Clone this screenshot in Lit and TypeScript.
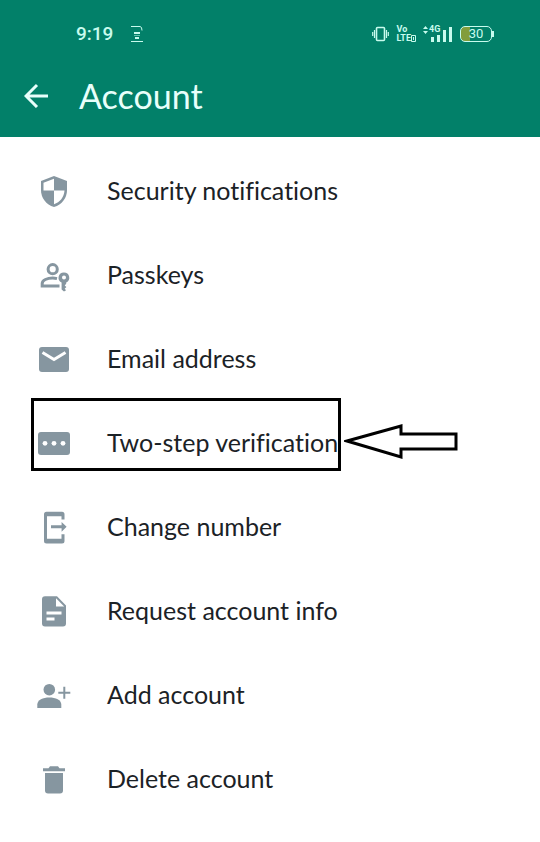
import { LitElement, html, css, svg } from "lit";
import { customElement } from "lit/decorators.js";

const icons = {
  shield: svg`
    <path d="M18 3 31 8v9c0 8-5 14.500-13 17C10 31.500 5 25 5 17V8z" />
    <path class="paper" d="M7.500 9.800 18 5.800V17.500H7.500zM18 17.500h10.500C28 24.500 24 29 18 31.300z" />`,
  passkey: svg`
    <circle class="line" cx="16.700" cy="12.200" r="4.600" />
    <path class="line" d="M23.500 29H6.200v-2.500c0-3.500 5-5.400 10.500-5.400 1.500 0 3 .2 4.300.5" />
    <path fill-rule="evenodd" d="M28 15.400a5.300 5.300 0 0 1 2.200 10.100v1.300l-1.500 1.600 1.700 1.700-1.700 1.700 1.400 1.400L28 34.500l-2.400-2V25.500A5.300 5.300 0 0 1 28 15.400zm0 3.200a2 2 0 1 0 0 4 2 2 0 0 0 0-4z" />`,
  mail: svg`
    <rect x="3" y="6" width="30" height="25" rx="3" />
    <path class="mark" d="m6.500 11.500 11.500 7 11.500-7" />`,
  pin: svg`
    <rect x="2" y="7" width="32" height="23" rx="3" />
    <g class="paper"><circle cx="9" cy="18.300" r="2.400" /><circle cx="18" cy="18.300" r="2.400" /><circle cx="27" cy="18.300" r="2.400" /></g>`,
  change: svg`
    <path fill-rule="evenodd" d="M10.500 2.700H26a2.500 2.500 0 0 1 2.500 2.500v5.300h-3V7.200H11v22.600h14.500v-4.500h3V32a2.500 2.500 0 0 1-2.500 2.500H10.500A2.500 2.500 0 0 1 8 32V5.200a2.500 2.500 0 0 1 2.500-2.500z" />
    <path d="M15 16.300h10.600v-3.400l5 4.900-5 4.900v-3.400H15z" />`,
  document: svg`
    <path d="M9 3.300h12L30 12.500V30.500a3 3 0 0 1-3 3H9a3 3 0 0 1-3-3V6.300a3 3 0 0 1 3-3z" />
    <path class="paper" d="M20 5.300v8.200h8.200z" />
    <path class="mark" d="M10.500 20h15M10.500 26h8" />`,
  add: svg`
    <circle cx="13.300" cy="12.700" r="5.800" />
    <path d="M1.300 31v-3.500c0-4.500 5.700-7 12-7s12 2.500 12 7V31z" />
    <path class="line plus" d="M28.300 9.700v12M22.300 15.700h12" />`,
  trash: svg`
    <path d="M14 5.300h8l1.500 2H29v3H7v-3h5.500z" />
    <path d="M9 12h18v17.500a3 3 0 0 1-3 3H12a3 3 0 0 1-3-3z" />`,
};

const items: { label: string; icon: keyof typeof icons; marked?: boolean }[] = [
  { label: "Security notifications", icon: "shield" },
  { label: "Passkeys", icon: "passkey" },
  { label: "Email address", icon: "mail" },
  { label: "Two-step verification", icon: "pin", marked: true },
  { label: "Change number", icon: "change" },
  { label: "Request account info", icon: "document" },
  { label: "Add account", icon: "add" },
  { label: "Delete account", icon: "trash" },
];

@customElement("app-root")
export class AppRoot extends LitElement {
  static styles = css`
    :host {
      display: block;
      min-height: 100vh;
      background: #fff;
      color: #1b2226;
      font-family: Lato, "Open Sans", sans-serif;
      font-variant-ligatures: none;
    }
    button {
      border: 0;
      padding: 0;
      margin: 0;
      background: none;
      color: inherit;
      font: inherit;
      text-align: left;
    }
    svg {
      display: block;
      flex: none;
    }
    header {
      background: #028069;
      color: #e8fffb;
      padding: 16px 24px 0;
    }
    .status {
      display: flex;
      align-items: center;
      height: 36px;
      padding: 0 22px 0 52px;
      color: #c8fbee;
    }
    .time {
      font: 500 19px/24px Roboto, sans-serif;
      margin-right: 16px;
    }
    .tray {
      display: flex;
      align-items: center;
      gap: 7px;
      margin-left: auto;
    }
    .volte {
      display: grid;
      font: 700 9px/9px Roboto, sans-serif;
    }
    .lte {
      display: flex;
      align-items: center;
    }
    .signal {
      display: grid;
      grid-template-columns: 6px auto;
    }
    .signal svg,
    .signal span {
      grid-row: 1;
    }
    .signal svg {
      grid-column: 1 / 3;
    }
    .signal span {
      grid-column: 2;
      font: 700 9px/9px Roboto, sans-serif;
    }
    .battery {
      display: flex;
      align-items: center;
    }
    .cell {
      box-sizing: border-box;
      width: 32px;
      height: 16px;
      border: 1px solid currentColor;
      border-radius: 5px;
      background: linear-gradient(90deg, #829d3b 9px, transparent 9px);
      font: 13px/14px Roboto, sans-serif;
      text-align: center;
    }
    .nub {
      width: 2px;
      height: 6px;
      background: currentColor;
    }
    .bar {
      display: flex;
      align-items: center;
      gap: 30px;
      height: 85px;
    }
    h1 {
      margin: 0;
      padding-top: 2px;
      font-size: 34px;
      line-height: 48px;
      font-weight: 400;
    }
    ul {
      list-style: none;
      margin: 0;
      padding: 12px 0;
    }
    li {
      position: relative;
    }
    .item {
      display: flex;
      align-items: center;
      gap: 35px;
      width: 100%;
      height: 84px;
      padding: 0 36px;
      font-size: 25px;
      line-height: 32px;
    }
    .label {
      padding-bottom: 2px;
    }
    .icon {
      fill: #8696a0;
    }
    .paper {
      fill: #fff;
    }
    .line {
      fill: none;
      stroke: #8696a0;
      stroke-width: 3;
    }
    .plus {
      stroke-width: 2;
    }
    .mark {
      fill: none;
      stroke: #fff;
      stroke-width: 3;
    }
    .frame {
      position: absolute;
      box-sizing: border-box;
      left: 31px;
      top: -3px;
      width: 310px;
      height: 73px;
      border: 3px solid #000;
      pointer-events: none;
    }
    .arrow {
      position: absolute;
      left: 344px;
      top: 20px;
      fill: #fff;
      stroke: #000;
      stroke-width: 3;
      pointer-events: none;
    }
  `;

  render() {
    return html`
      <header>
        <div class="status">
          <span class="time">9:19</span>
          <svg width="16" height="20" viewBox="0 0 16 20" fill="none" stroke="currentColor">
            <path d="M2 2.500h9q2 0 2 4M2 17.500h12" />
            <path d="M5 9h6M6 14h4" stroke-width="2" />
            <path d="M5 11.500h6" opacity=".5" />
          </svg>
          <div class="tray">
            <svg width="17" height="16" viewBox="0 0 17 16" fill="none" stroke="currentColor">
              <rect x="4.500" y="1.500" width="8" height="13" rx="1" stroke-width="1.600" />
              <path d="M2.500 4v8M14.500 4v8M.7 6v4M16.300 6v4" stroke-width="1.200" />
            </svg>
            <div class="volte">
              <span>Vo</span>
              <span class="lte">LTE
                <svg width="5" height="7" viewBox="0 0 5 7" fill="none" stroke="currentColor">
                  <path d="M.5.5h4v6h-4zM2.500 2v3" />
                </svg>
              </span>
            </div>
            <div class="signal">
              <svg width="30" height="18" viewBox="0 0 30 18" fill="currentColor">
                <path d="m0 4 2.500-3L5 4zM0 6h5L2.500 9zM8 12h3v5H8zM14 10h3v7h-3zM20 5h3v12h-3zM26 2h3v15h-3z" />
              </svg>
              <span>4G</span>
            </div>
            <div class="battery"><span class="cell">30</span><span class="nub"></span></div>
          </div>
        </div>
        <div class="bar">
          <button class="back" aria-label="Back">
            <svg width="25" height="26" viewBox="0 0 25 26" fill="none" stroke="currentColor" stroke-width="3">
              <path d="M24 14H2M13 3 2 14l11 11" />
            </svg>
          </button>
          <h1>Account</h1>
        </div>
      </header>
      <ul>
        ${items.map(
          (item) => html`<li>
            <button class="item">
              <svg class="icon" width="36" height="36" viewBox="0 0 36 36">${icons[item.icon]}</svg>
              <span class="label">${item.label}</span>
            </button>
            ${item.marked
              ? html`<div class="frame"></div>
                  <svg class="arrow" width="114" height="40" viewBox="0 0 114 40">
                    <path d="M3 20 57 5v8h55v15H57v8z" />
                  </svg>`
              : null}
          </li>`
        )}
      </ul>
    `;
  }
}
